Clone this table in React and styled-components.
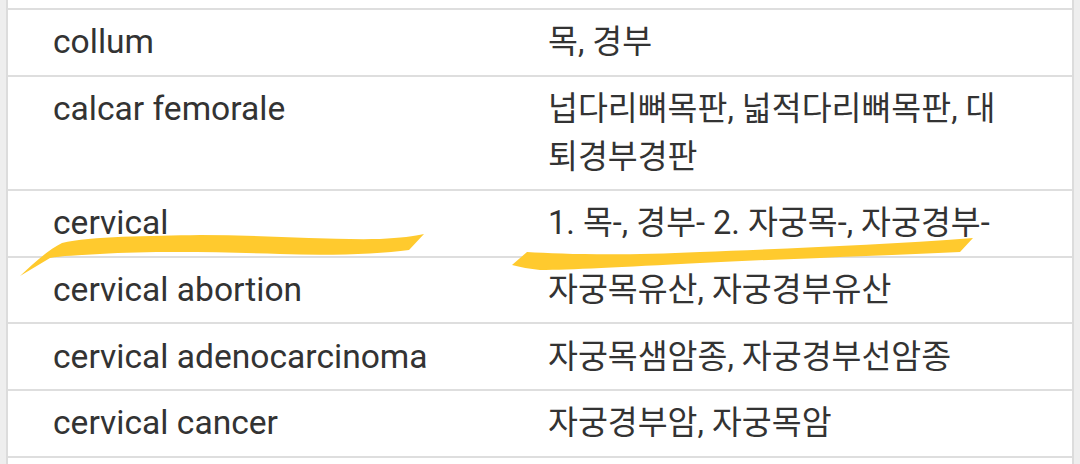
import React from "react";
import styled, { createGlobalStyle } from "styled-components";

const GlobalStyle = createGlobalStyle`
  html, body {
    margin: 0;
    padding: 0;
    background: #eeeeee;
  }
  #root {
    height: 464px;
    overflow: hidden;
  }
`;

const Page = styled.div`
  position: relative;
  height: 464px;
  padding: 0 6px;
  box-sizing: border-box;
`;

const Table = styled.div`
  background: #ffffff;
  height: 100%;
  box-sizing: border-box;
  border-left: 2px solid #dcdcdc;
  border-right: 2px solid #dcdcdc;
  padding: 8px 0;
`;

const Row = styled.div`
  display: grid;
  grid-template-columns: 495px 1fr;
  border-top: 2px solid #dedede;
  &:last-child {
    border-bottom: 2px solid #dedede;
  }
`;

const Cell = styled.div`
  padding: 8.3px 52px 8.3px 45px;
  font-family: Roboto, "Noto Sans CJK KR", sans-serif;
  font-size: ${(p) => (p.$ko ? "32.5px" : "33.6px")};
  line-height: 48px;
  color: #333333;
  word-break: ${(p) => (p.$ko ? "break-all" : "normal")};
`;

const Marker = styled.svg`
  position: absolute;
  left: 0;
  top: 0;
  width: 1080px;
  height: 464px;
  pointer-events: none;
`;

const rows = [
  ["collum", "목, 경부"],
  ["calcar femorale", "넙다리뼈목판, 넓적다리뼈목판, 대퇴경부경판"],
  ["cervical", "1. 목-, 경부- 2. 자궁목-, 자궁경부-"],
  ["cervical abortion", "자궁목유산, 자궁경부유산"],
  ["cervical adenocarcinoma", "자궁목샘암종, 자궁경부선암종"],
  ["cervical cancer", "자궁경부암, 자궁목암"],
];

const App = () => {
  return (
    <Page>
      <GlobalStyle />
      <Table>
        {rows.map((item, index) => (
          <Row key={index}>
            <Cell>{item[0]}</Cell>
            <Cell $ko>{item[1]}</Cell>
          </Row>
        ))}
      </Table>
      <Marker viewBox="0 0 1080 464">
        <path
          fill="#ffca2e"
          d="M20,276 C35,262 48,250 62,243 C90,236 150,236 200,235 C260,235 320,240 380,239 C400,238 415,236 424,234 L409,250 C380,254 330,256 280,254 C220,252 150,251 100,254 C80,255 60,256 50,258 C40,264 30,270 20,276 Z"
        />
        <path
          fill="#ffca2e"
          d="M512,265 L527,252 C560,254 620,256 700,252 C780,249 880,245 973,238 L960,252 C880,256 780,259 700,263 C620,267 570,270 540,270 C530,269 520,267 512,265 Z"
        />
      </Marker>
    </Page>
  );
};

export default App;
